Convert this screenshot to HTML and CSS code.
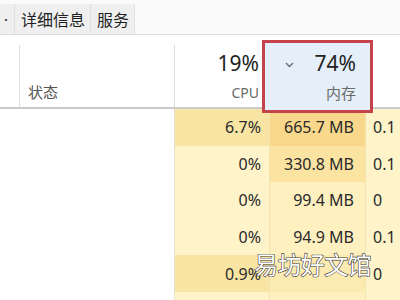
FILE: index.html
```html
<!DOCTYPE html>
<html lang="zh-CN">
<head>
    <meta charset="UTF-8">
    <title>任务管理器</title>
    <link rel="stylesheet" href="styles.css">
</head>
<body>
    <div class="tabs">
        <div class="tab cut">&#8226;</div>
        <div class="tab">详细信息</div>
        <div class="tab">服务</div>
    </div>

    <div class="head">
        <div class="cell first"></div>
        <div class="cell name">状态</div>
        <div class="cell stat">
            <span class="big">19%</span>
            <span class="label">CPU</span>
        </div>
        <div class="cell stat mem">
            <span class="chev">
                <svg width="9" height="6" viewBox="0 0 9 6"><path d="M1 1 L4.5 4.5 L8 1" fill="none" stroke="#6b6b6b" stroke-width="1.3"/></svg>
            </span>
            <span class="big">74%</span>
            <span class="label cn">内存</span>
        </div>
        <div class="cell rest"></div>
        <div class="mark"></div>
    </div>

    <div class="rows">
        <div class="row">
            <div class="c blank"></div>
            <div class="c cpu hot">6.7%</div>
            <div class="c memv hot">665.7 MB</div>
            <div class="c disk">0.1</div>
        </div>
        <div class="row">
            <div class="c blank"></div>
            <div class="c cpu">0%</div>
            <div class="c memv warm">330.8 MB</div>
            <div class="c disk">0.1</div>
        </div>
        <div class="row">
            <div class="c blank"></div>
            <div class="c cpu">0%</div>
            <div class="c memv">99.4 MB</div>
            <div class="c disk">0</div>
        </div>
        <div class="row">
            <div class="c blank"></div>
            <div class="c cpu">0%</div>
            <div class="c memv">94.9 MB</div>
            <div class="c disk">0.1</div>
        </div>
        <div class="row">
            <div class="c blank"></div>
            <div class="c cpu hot">0.9%</div>
            <div class="c memv mild"></div>
            <div class="c disk">0</div>
        </div>
        <div class="row">
            <div class="c blank"></div>
            <div class="c cpu"></div>
            <div class="c memv"></div>
            <div class="c disk"></div>
        </div>
    </div>

    <div class="watermark">易坊好文馆</div>
</body>
</html>
```

FILE: styles.css
```css
* {
    box-sizing: border-box;
    margin: 0;
    padding: 0;
}

body {
    width: 400px;
    height: 300px;
    overflow: hidden;
    background: #ffffff;
    font-family: "Noto Sans", "Noto Sans CJK SC", sans-serif;
    color: #1f1f1f;
    position: relative;
}

.tabs {
    display: flex;
    height: 35px;
    background: #fafafa;
    border-bottom: 1px solid #dcdcdc;
}

.tab {
    display: flex;
    align-items: center;
    padding: 0 5px 0 6px;
    margin-top: 4px;
    background: #efefef;
    border-right: 1px solid #e0e0e0;
    font-size: 16px;
    font-family: "Noto Sans CJK SC", sans-serif;
}

.tab.cut {
    width: 15px;
    padding: 0 0 0 1px;
    font-size: 10px;
    color: #333;
}

.head {
    position: relative;
    display: grid;
    grid-template-columns: 20px 155px 95px 96px 1fr;
    height: 74px;
    border-bottom: 2px solid #cacaca;
}

.cell {
    border-right: 1px solid #dedede;
    margin-top: 10px;
}

.cell.rest,
.cell.stat {
    border-right: none;
}

.name {
    display: flex;
    align-items: flex-end;
    padding: 0 0 5px 8px;
    font-size: 15px;
    color: #555;
    font-family: "Noto Sans CJK SC", sans-serif;
}

.stat {
    position: relative;
    display: flex;
    flex-direction: column;
    align-items: flex-end;
    padding: 5px 11px 0 0;
    z-index: 1;
}

.stat.mem {
    padding-right: 10px;
}

.big {
    font-size: 21px;
    line-height: 27px;
    color: #222;
}

.label {
    margin-top: 6px;
    font-size: 14px;
    color: #6a6a6a;
}

.label.cn {
    margin-top: 5px;
    font-size: 15px;
    font-family: "Noto Sans CJK SC", sans-serif;
}

.chev {
    position: absolute;
    left: 15px;
    top: 17px;
    line-height: 0;
}

.mark {
    position: absolute;
    left: 262px;
    top: 5px;
    width: 111px;
    height: 73px;
    background: #e4eff9;
    border: 3px solid #c5434b;
}

.rows {
    display: flex;
    flex-direction: column;
}

.row {
    display: grid;
    grid-template-columns: 175px 95px 96px 1fr;
    height: 36.6px;
}

.c {
    display: flex;
    align-items: center;
    font-size: 16px;
    color: #2a2a2a;
}

.blank {
    background: #ffffff;
    border-right: 1px solid #e6e1cf;
}

.cpu {
    justify-content: flex-end;
    padding-right: 8px;
    background: #fff3c9;
    border-right: 1px solid #f3e3b0;
}

.memv {
    justify-content: flex-end;
    padding-right: 11px;
    background: #fff0c0;
    border-right: 1px solid #f3e3b0;
}

.disk {
    padding-left: 7px;
    background: #fff3c9;
}

.cpu.hot {
    background: #f9e5a3;
}

.memv.hot {
    background: #f9d88b;
}

.memv.warm {
    background: #fbe3a2;
}

.memv.mild {
    background: #fcebb0;
}

.watermark {
    position: absolute;
    left: 254px;
    top: 246px;
    font-size: 24px;
    font-family: "Noto Sans CJK SC", sans-serif;
    color: #ffffff;
    letter-spacing: -0.6px;
    -webkit-text-stroke: 1.2px #3a3a3a;
    paint-order: stroke fill;
}
```
